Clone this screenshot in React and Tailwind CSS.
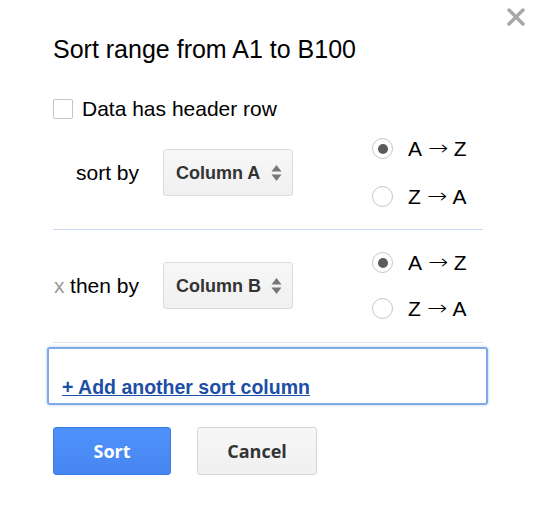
import React from "react";

function Radio({ checked, from, to }) {
  return (
    <div className="flex items-center h-[21px]">
      <span className="w-[21px] h-[21px] rounded-full border border-[#c4c4c4] bg-white flex items-center justify-center shrink-0">
        {checked && <span className="w-[10px] h-[10px] rounded-full bg-[#5b5b5b]" />}
      </span>
      <span className="ml-[15px] flex items-center text-[21px] leading-[21px] text-black whitespace-nowrap">
        {from}
        <span className="inline-block ml-[8px] mr-[7px] font-['DejaVu_Sans',sans-serif] font-extralight text-[20px] scale-x-[1.2] origin-center">→</span>
        {to}
      </span>
    </div>
  );
}

function Select({ value }) {
  return (
    <div className="w-[130px] h-[47px] shrink-0 flex items-center justify-between pl-[12px] pr-[10px] rounded-[3px] border border-[#dcdcdc] bg-gradient-to-b from-[#f7f7f7] to-[#f0f0f0]">
      <span className="text-[18px] font-bold text-[#333] leading-none">{value}</span>
      <svg width="11" height="18" viewBox="0 0 11 18">
        <path d="M5.5 1 L10.5 7.5 L0.5 7.5 Z" fill="#777" />
        <path d="M5.5 17 L10.5 10.5 L0.5 10.5 Z" fill="#777" />
      </svg>
    </div>
  );
}

function SortRow({ prefix, label, value, gap }) {
  return (
    <div className="flex items-center">
      <div className="w-[110px] pr-[24px] flex items-center justify-end text-[21px] leading-none text-black">
        {prefix && <span className="text-[#999] mr-auto pl-[1px]">x</span>}
        <span>{label}</span>
      </div>
      <Select value={value} />
      <div className={`ml-[79px] flex flex-col ${gap}`}>
        <Radio checked from="A" to="Z" />
        <Radio from="Z" to="A" />
      </div>
    </div>
  );
}

export default function App() {
  return (
    <div className="relative w-[540px] h-[505px] bg-white overflow-hidden font-['Liberation_Sans',Arial,sans-serif]">
      {/* close */}
      <button className="absolute top-[8px] right-[15px] w-[18px] h-[18px]">
        <svg width="18" height="18" viewBox="0 0 18 18">
          <path d="M2 2 L16 16 M16 2 L2 16" stroke="#a8a8a8" strokeWidth="3.5" strokeLinecap="round" />
        </svg>
      </button>

      <div className="pl-[53px] pt-[34px]">
        <h1 className="text-[25px] leading-[30px] text-black whitespace-nowrap">Sort range from A1 to B100</h1>

        <label className="mt-[35px] flex items-center h-[20px]">
          <span className="w-[20px] h-[20px] rounded-[2px] border border-[#c4c4c4] bg-white shrink-0" />
          <span className="ml-[9px] text-[21px] leading-[20px] text-black">Data has header row</span>
        </label>

        <div className="mt-[19px]">
          <SortRow label="sort by" value="Column A" gap="gap-[27px]" />
        </div>

        <div className="mt-[22px] w-[430px] h-px bg-[#c9d7ee]" />

        <div className="mt-[22px]">
          <SortRow prefix label="then by" value="Column B" gap="gap-[25px]" />
        </div>

        <div className="mt-[23px] w-[430px] h-px bg-[#dde4ee]" />

        <div className="mt-[4px] -ml-[6px] w-[441px] h-[58px] rounded-[3px] border-2 border-[#80aae3] shadow-[0_0_3px_#a9c6ee] pl-[13px] pt-[28px]">
          <a href="#" className="text-[19.5px] leading-[20px] font-bold text-[#1c4ea6] underline">
            + Add another sort column
          </a>
        </div>

        <div className="mt-[22px] flex gap-[26px]">
          <button className="w-[118px] h-[48px] rounded-[3px] border border-[#3a7ae6] bg-gradient-to-b from-[#4f91fb] to-[#4686f0] text-white text-[18px] font-bold font-['Open_Sans',sans-serif]">
            Sort
          </button>
          <button className="w-[120px] h-[48px] rounded-[3px] border border-[#d6d6d6] bg-gradient-to-b from-[#f7f7f7] to-[#f0f0f0] text-[#333] text-[18px] font-bold font-['Open_Sans',sans-serif]">
            Cancel
          </button>
        </div>
      </div>
    </div>
  );
}
